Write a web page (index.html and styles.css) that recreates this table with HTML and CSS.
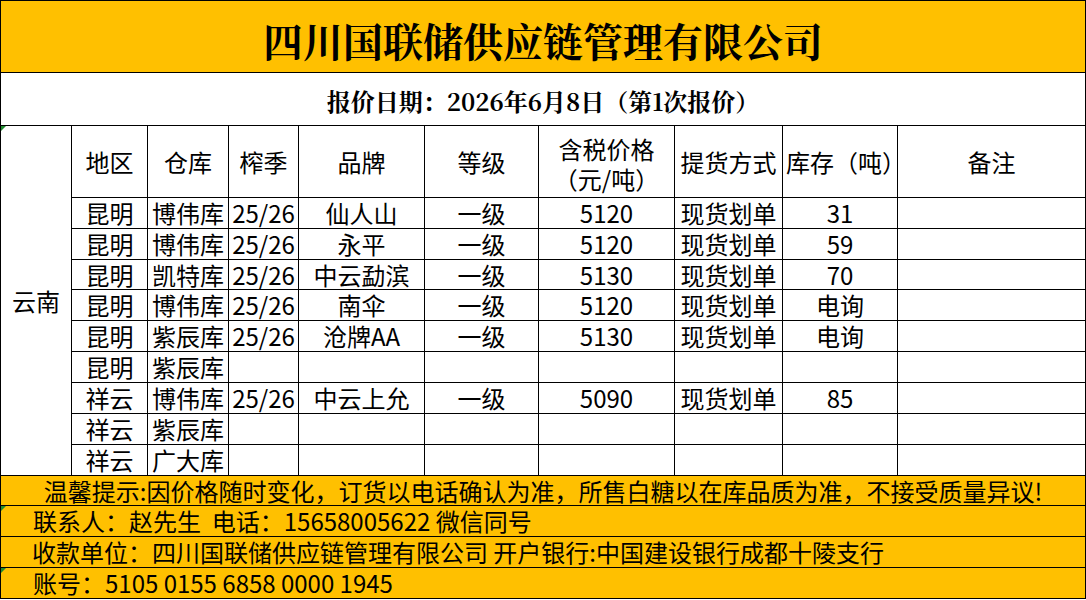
FILE: index.html
```html
<!DOCTYPE html>
<html lang="zh-CN">
<head>
<meta charset="utf-8">
<title>四川国联储供应链管理有限公司 报价</title>
<link rel="stylesheet" href="styles.css">
</head>
<body>
<div class="sheet">
  <div class="cell title">四川国联储供应链管理有限公司</div>
  <div class="cell subtitle">报价日期：2026年6月8日（第1次报价）</div>

  <div class="cell region flag">云南</div>
  <div class="cell">地区</div>
  <div class="cell">仓库</div>
  <div class="cell">榨季</div>
  <div class="cell">品牌</div>
  <div class="cell">等级</div>
  <div class="cell twoline">含税价格<br>（元/吨）</div>
  <div class="cell">提货方式</div>
  <div class="cell start">库存（吨）</div>
  <div class="cell">备注</div>

  <div class="cell">昆明</div><div class="cell">博伟库</div><div class="cell">25/26</div><div class="cell">仙人山</div><div class="cell">一级</div><div class="cell">5120</div><div class="cell">现货划单</div><div class="cell">31</div><div class="cell"></div>
  <div class="cell">昆明</div><div class="cell">博伟库</div><div class="cell">25/26</div><div class="cell">永平</div><div class="cell">一级</div><div class="cell">5120</div><div class="cell">现货划单</div><div class="cell">59</div><div class="cell"></div>
  <div class="cell">昆明</div><div class="cell">凯特库</div><div class="cell">25/26</div><div class="cell">中云勐滨</div><div class="cell">一级</div><div class="cell">5130</div><div class="cell">现货划单</div><div class="cell">70</div><div class="cell"></div>
  <div class="cell">昆明</div><div class="cell">博伟库</div><div class="cell">25/26</div><div class="cell">南伞</div><div class="cell">一级</div><div class="cell">5120</div><div class="cell">现货划单</div><div class="cell">电询</div><div class="cell"></div>
  <div class="cell">昆明</div><div class="cell">紫辰库</div><div class="cell">25/26</div><div class="cell">沧牌AA</div><div class="cell">一级</div><div class="cell">5130</div><div class="cell">现货划单</div><div class="cell">电询</div><div class="cell"></div>
  <div class="cell">昆明</div><div class="cell">紫辰库</div><div class="cell"></div><div class="cell"></div><div class="cell"></div><div class="cell"></div><div class="cell"></div><div class="cell"></div><div class="cell"></div>
  <div class="cell">祥云</div><div class="cell">博伟库</div><div class="cell">25/26</div><div class="cell">中云上允</div><div class="cell">一级</div><div class="cell">5090</div><div class="cell">现货划单</div><div class="cell">85</div><div class="cell"></div>
  <div class="cell">祥云</div><div class="cell">紫辰库</div><div class="cell"></div><div class="cell"></div><div class="cell"></div><div class="cell"></div><div class="cell"></div><div class="cell"></div><div class="cell"></div>
  <div class="cell">祥云</div><div class="cell">广大库</div><div class="cell"></div><div class="cell"></div><div class="cell"></div><div class="cell"></div><div class="cell"></div><div class="cell"></div><div class="cell"></div>

  <div class="cell note">温馨提示:因价格随时变化，订货以电话确认为准，所售白糖以在库品质为准，不接受质量异议!</div>
  <div class="cell note left flag">联系人：赵先生&nbsp;&nbsp;电话：15658005622 微信同号</div>
  <div class="cell note left pay">收款单位：四川国联储供应链管理有限公司 开户银行:中国建设银行成都十陵支行</div>
  <div class="cell note left flag">账号：5105 0155 6858 0000 1945</div>
</div>
</body>
</html>
```

FILE: styles.css
```css
html, body {
  margin: 0;
  padding: 0;
  background: #ffffff;
}

body {
  font-family: "Noto Sans CJK SC", "Noto Sans", sans-serif;
  color: #000000;
}

.sheet {
  display: grid;
  grid-template-columns: 70px 75px 80px 69px 125px 113px 135px 107px 114px 187px;
  grid-template-rows: 71px 52px 71px 30px 30px 29px 30px 30px 30px 30px 30px 30px 29px 30px 30px 30px;
  gap: 1px;
  padding: 1px;
  background: #000000;
  width: max-content;
}

.cell {
  position: relative;
  background: #ffffff;
  display: flex;
  align-items: center;
  justify-content: center;
  text-align: center;
  font-size: 24px;
  line-height: 26px;
  white-space: nowrap;
  min-width: 0;
  min-height: 0;
}

.title {
  grid-column: 1 / -1;
  background: #ffc000;
  font-family: "Noto Serif CJK SC", "Source Han Serif SC", "Noto Sans CJK SC", serif;
  font-weight: 700;
  font-size: 40px;
  line-height: 44px;
  padding-top: 6px;
  box-sizing: border-box;
}

.subtitle {
  grid-column: 1 / -1;
  font-family: "Noto Serif CJK SC", "Source Han Serif SC", "Noto Sans CJK SC", serif;
  font-weight: 700;
  font-size: 24px;
  line-height: 30px;
  padding-top: 4px;
  box-sizing: border-box;
}

.region {
  grid-column: 1;
  grid-row: 3 / span 10;
}

.twoline {
  line-height: 30px;
  white-space: normal;
  padding-top: 5px;
  box-sizing: border-box;
}

.start {
  justify-content: flex-start;
  padding-left: 3px;
}

.note {
  grid-column: 1 / -1;
  background: #ffc000;
}

.note.left {
  justify-content: flex-start;
  padding-left: 32px;
}

.note.pay {
  padding-left: 31px;
}

.flag::before {
  content: "";
  position: absolute;
  top: 0;
  left: 0;
  width: 0;
  height: 0;
  border-top: 5px solid #1f8a2e;
  border-right: 5px solid transparent;
}
```
